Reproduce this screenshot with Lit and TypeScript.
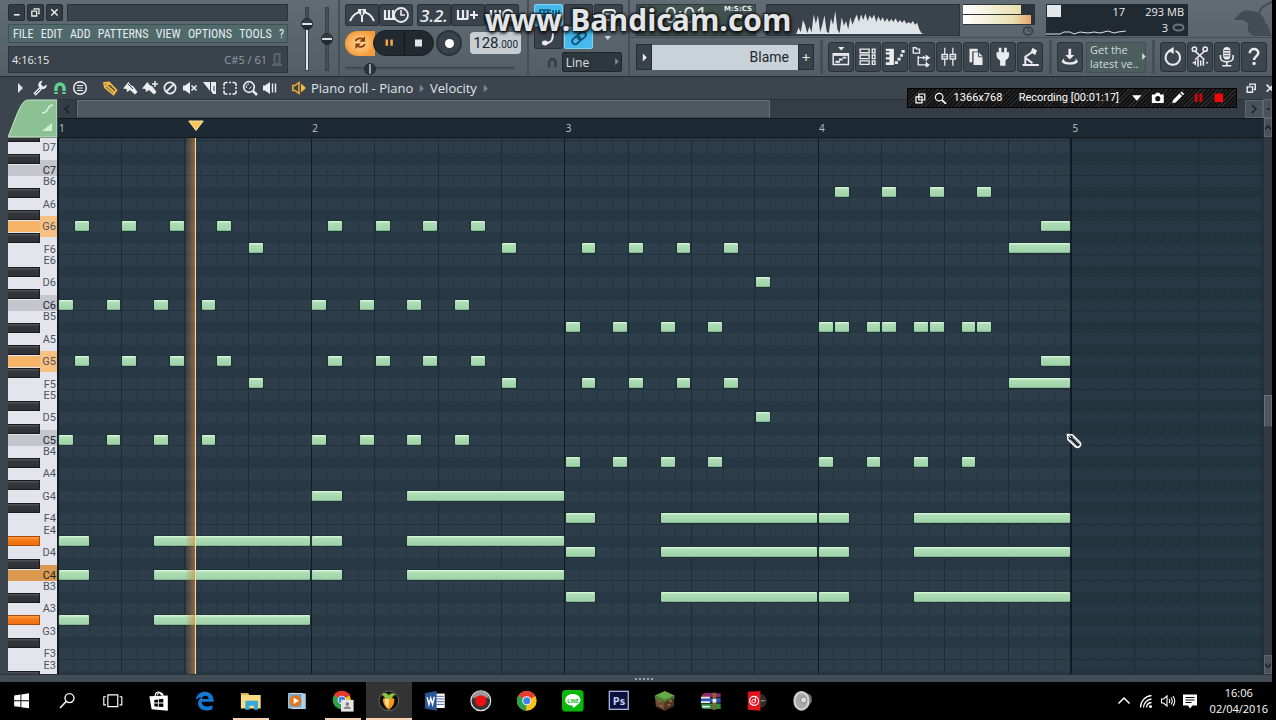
import { LitElement, html, svg, css, nothing, TemplateResult } from "lit";
import { customElement, property } from "lit/decorators.js";
import { classMap } from "lit/directives/class-map.js";
import { styleMap } from "lit/directives/style-map.js";

/* ---------- icon set ---------- */

const w = "#e8edf0";
const ICONS: Record<string, [number, number, TemplateResult]> = {
  minimize: [16, 16, svg`<path d="M5 11h7" stroke=${w} stroke-width="2"/>`],
  restore: [16, 16, svg`<path d="M6.500 5V3.500h6v6H11M3.500 6.500h6v6h-6z" fill="none" stroke=${w} stroke-width="1.600"/>`],
  close: [16, 16, svg`<path d="M4 4l8 8M12 4l-8 8" stroke=${w} stroke-width="1.800"/>`],
  metronome: [32, 20, svg`<path d="M4 16C7 9 11 7 16 7s9 2 12 9M16 4v13" fill="none" stroke=${w} stroke-width="2"/><path d="M12 4h8v3l-4 5-4-5z" fill=${w}/><path d="M16 5v5" stroke="#3a434c" stroke-width="1.500"/>`],
  waitinput: [32, 20, svg`<path d="M5 5v9h11M9 5v9M13 5v9" fill="none" stroke=${w} stroke-width="2.200"/><circle cx="21" cy="10" r="7" fill="#3a434c" stroke=${w} stroke-width="1.800"/><path d="M21 5v5h4" fill="none" stroke=${w} stroke-width="1.600"/>`],
  stepadd: [32, 20, svg`<path d="M6 5v9h10M11 5v9M15.500 5v9" fill="none" stroke=${w} stroke-width="2.200"/><path d="M18 10h8M22 6v8" stroke=${w} stroke-width="2"/>`],
  loopkeys: [32, 20, svg`<path d="M5 5v9h10M9.500 5v9M14 5v9" fill="none" stroke=${w} stroke-width="2.200"/><path d="M19 14a5 5 0 1 1 6 0M24 16l3-4-5-1" fill="none" stroke=${w} stroke-width="1.800"/>`],
  typing: [28, 20, svg`<path d="M4 5h12M4 8.500h12M4 12h12M5 5v10M9 5v10M13 5v10M18 5v10h6M21 5v10M24 5v10" stroke="#0d5273" stroke-width="1.500" fill="none"/>`],
  arrowbar: [28, 20, svg`<path d="M7 10h9M14 6l4 4-4 4M20 5v10" stroke=${w} stroke-width="2" fill="none"/>`],
  knob: [28, 20, svg`<rect x="8" y="5" width="12" height="10" rx="3" fill="none" stroke=${w} stroke-width="2"/><path d="M10 9h8" stroke=${w}/>`],
  slide: [28, 20, svg`<path d="M9 15c7 1 9-3 9-10" stroke=${w} stroke-width="2" fill="none"/><ellipse cx="10" cy="15" rx="3" ry="2.400" fill=${w}/>`],
  link: [28, 20, svg`<g fill="none" stroke="#0d5273" stroke-width="1.800" transform="rotate(-40 14 10)"><rect x="6" y="7" width="9" height="6" rx="3"/><rect x="13" y="7" width="9" height="6" rx="3"/></g>`],
  loop: [28, 24, svg`<g fill="none" stroke="#8a3d0c" stroke-width="2.400"><path d="M8 10c2-4 7-4 10-2M20 14c-2 4-7 4-10 2"/></g><path d="M20 4v7h-7zM8 20v-7h7z" fill="#8a3d0c"/>`],
  pause: [28, 24, svg`<path d="M11 8v8M17 8v8" stroke="#f6a54a" stroke-width="3.200"/>`],
  stop: [28, 24, svg`<rect x="10" y="8.500" width="7" height="7" fill="#dfe4e8"/>`],
  magnet: [16, 16, svg`<path d="M4 14V8a4 4 0 0 1 8 0v6" fill="none" stroke="currentColor" stroke-width="3.400"/><path d="M2 11.500h4M10 11.500h4" stroke="#3a434c"/>`],
  playlist: [24, 24, svg`<path d="M9 1h7l-3.500 4z" fill=${w}/><path d="M3.500 8.500h17v12h-17z" fill="none" stroke=${w} stroke-width="1.600"/><path d="M4 10h16" stroke=${w} stroke-width="2"/><path d="M6 17.500h5M10 15h4M14 13h4" stroke=${w} stroke-width="2"/>`],
  rack: [24, 24, svg`<g fill="none" stroke=${w} stroke-width="1.500"><path d="M3.500 3.500h10v4h-10zM3.500 10h10v4h-10zM3.500 16.500h10v4h-10z"/><path d="M17 3.500h3v4h-3zM17 10h3v4h-3zM17 16.500h3v4h-3z"/></g>`],
  roll: [24, 24, svg`<path d="M2 3h9v18H2v-3h4v-3H2v-2.500h4v-3H2V7h4V5.500H2z" fill=${w}/><path d="M12 18.500h3.500M15 14.500h3.500M18 10.500h3M19.500 6h3.500" fill="none" stroke=${w} stroke-width="3"/>`],
  browser: [24, 24, svg`<path d="M2.500 2v6h7V3.500H6.500L5.500 2z M8 11v10h5M8 13h6M14 11v4M17 10v7M17 18v5M13 21h7M14 13h7" fill="none" stroke=${w} stroke-width="1.500"/><path d="M17 10l4 3-4 3zM17 18l4 3-4 3z" fill=${w}/>`],
  mixer: [24, 24, svg`<path d="M7.500 2v20M16.500 2v20" stroke=${w} stroke-width="1.400"/><g fill="#3a434c" stroke=${w} stroke-width="1.500"><path d="M4.500 9.500h6v5h-6zM13.500 9.500h6v5h-6z"/></g><path d="M4 12h7M13 12h7" stroke=${w}/>`],
  paste: [24, 24, svg`<path d="M5 3h9v3H8v12H5z" fill=${w}/><path d="M9.500 7H15l4.500 4.500V21h-10z" fill=${w}/><path d="M15 7v5h5" fill="none" stroke="#3a434c"/>`],
  plug: [24, 24, svg`<path d="M7.500 2h3v5h3V2h3v5H19v3c0 4-3 5-4 6v6H9v-6c-1-1-4-2-4-6V7h2.500z" fill=${w}/>`],
  tempo: [24, 24, svg`<path d="M15 2l5 3-2 5-5-3z" fill=${w}/><path d="M14.500 7L7 12v8M7 13l8 6M4 21h18" stroke=${w} stroke-width="2.200" fill="none"/>`],
  download: [24, 24, svg`<path d="M10.500 3h3v7h3.500l-5 5-5-5h3.500z" fill=${w}/><path d="M6 13l-3 4c0 5 18 5 18 0l-3-4c2 4-2 5-6 5s-8-1-6-5z" fill=${w}/>`],
  undo: [24, 24, svg`<path d="M9 5.500a8 8 0 1 0 6 0" fill="none" stroke=${w} stroke-width="2.200"/><path d="M13 1v8L6.500 5z" fill=${w}/>`],
  cut: [24, 24, svg`<g fill="none" stroke=${w} stroke-width="1.700"><circle cx="6" cy="3.500" r="2.400"/><circle cx="18" cy="3.500" r="2.400"/><path d="M7 6l10 9M17 6L7 15"/><path d="M4 18.500h2M7 16v5M10 14v9M13 16v6M16 14v8M19 18.500h2"/></g>`],
  mic: [24, 24, svg`<rect x="8" y="1" width="8" height="14" rx="4" fill=${w}/><path d="M9 5h6M9 8h6M9 11h6" stroke="#3a434c"/><path d="M5 10v3c0 6 14 6 14 0v-3M12 17v4M7 22h10" fill="none" stroke=${w} stroke-width="1.800"/>`],
  help: [24, 24, svg`<path d="M7.500 8c0-6 9.500-6 9.500-.5 0 4-4.700 4-4.700 8" fill="none" stroke=${w} stroke-width="2.800"/><circle cx="12.300" cy="19.500" r="1.900" fill=${w}/>`],
  caret: [16, 16, svg`<path d="M6 3l5 5-5 5z" fill="currentColor"/>`],
  wrench: [16, 16, svg`<path d="M2.500 14.500L8.500 8.500" stroke=${w} stroke-width="3.200"/><path d="M14.800 4.500a4.300 4.300 0 1 1-4.200-3.800L8.800 4.200l2.500 2.500z" fill=${w}/><path d="M3.500 13.500l4.500-4.500" stroke="#3c454d" stroke-width="1"/>`],
  options: [16, 16, svg`<circle cx="8" cy="8" r="6.300" fill="none" stroke=${w} stroke-width="1.500"/><path d="M5 5.500h6M5 8h6M5 10.500h6" stroke=${w} stroke-width="1.200"/>`],
  pencil: [16, 16, svg`<path d="M2 3l5-.5 7.500 7.500-3 4.500L3 7.500zM3 7l4-4M5.500 6l6.500 6" fill="none" stroke="#f0b943" stroke-width="1.800"/>`],
  brush: [16, 16, svg`<path d="M1 8.500L6.500 2l2 3 3 1.500 4 5.500-2.500 2.500L8 10l-3 2-.5-3z" fill=${w}/><path d="M6 4l5 5" stroke="#3c454d"/>`],
  brushplus: [16, 16, svg`<path d="M0 8.500L5.500 2l2 3 3 1.500 4 5.500-2.500 2.500L7 10l-3 2-.5-3z" fill=${w}/><path d="M10 4h6M13 1v6" stroke=${w} stroke-width="1.500"/>`],
  erase: [16, 16, svg`<circle cx="8" cy="8" r="5.600" fill="none" stroke=${w} stroke-width="1.800"/><path d="M4 12l8-8" stroke=${w} stroke-width="1.800"/>`],
  mute: [16, 16, svg`<path d="M1 5.500h2L8 2v12L3 10.500H1z" fill=${w}/><path d="M9.500 5.500l5 5M14.500 5.500l-5 5" stroke=${w} stroke-width="1.600"/>`],
  slice: [16, 16, svg`<path d="M1 2h7v9z" fill=${w}/><path d="M9 2h5v12H11L9 11z" fill=${w}/><path d="M12 6v5" stroke="#3c454d"/>`],
  select: [16, 16, svg`<path d="M2 6V4.500a2 2 0 0 1 2-2h1.500M7 2.500h2M10.500 2.500H12a2 2 0 0 1 2 2V6M14 7v2M14 10.500V12a2 2 0 0 1-2 2h-1.500M9 14H7M5.500 14H4a2 2 0 0 1-2-2v-1.500M2 9V7" fill="none" stroke=${w} stroke-width="1.600"/>`],
  zoom: [16, 16, svg`<circle cx="7" cy="7" r="5.300" fill="none" stroke=${w} stroke-width="1.700"/><path d="M11 11l4 4" stroke=${w} stroke-width="2.600"/><path d="M4.500 8A3 3 0 0 1 7 4M9.500 6.500L7 9" stroke=${w} fill="none"/>`],
  playback: [16, 16, svg`<path d="M1 5.500h2L8 2v12L3 10.500H1z" fill=${w}/><path d="M10.500 3.500v9M13.500 3.500v9" stroke=${w} stroke-width="1.400"/>`],
  speaker: [16, 16, svg`<path d="M1.800 5.500h2L8 2.500v11l-4.200-3h-2z" fill="none" stroke="#f0a93a" stroke-width="1.500"/><path d="M10 3.500L15 8l-5 4.500z" fill="#f0b943"/>`],
  windows2: [16, 16, svg`<path d="M6 2.500h7.500V10H6zM2.500 6H10v7.500H2.500z" fill="none" stroke="#fff" stroke-width="1.500"/>`],
  camera: [16, 16, svg`<path d="M1 4h4l1-2h4l1 2h4v10H1z" fill="#fff"/><circle cx="8" cy="9" r="3" fill="#161616"/>`],
  pen: [16, 16, svg`<path d="M1.500 14.500l1-4 7.500-7.500 3 3-7.500 7.500zM11 2l1.500-1.500L15.500 3.500 14 5z" fill="#fff"/>`],
  recpause: [16, 16, svg`<path d="M5 3v10M10.500 3v10" stroke="#c40808" stroke-width="3.600"/>`],
  recstop: [16, 16, svg`<rect x="3" y="3" width="10" height="10" fill="#f00808"/>`],
  magnify: [16, 16, svg`<circle cx="6.500" cy="6.500" r="4.700" fill="none" stroke="#fff" stroke-width="1.500"/><path d="M10 10l5 5" stroke="#fff" stroke-width="2.200"/>`],
  down: [16, 16, svg`<path d="M2.500 5h11L8 11.500z" fill="currentColor"/>`],
  cursor: [16, 16, svg`<path d="M1.500 1.500l5 .5 7.500 7.500c2 3-1.500 6-4.300 4.300L2 6.500z" fill="#1b242b" stroke="#fff" stroke-width="1.600"/><path d="M4 6.500l7 7M6.500 4l7 7M1.500 1.500l3.500 3.500" stroke="#fff"/>`],
  start: [24, 24, svg`<path d="M3.500 6l7-1v6.500h-7zM11.500 4.900l8.500-1.200v7.800h-8.500zM3.500 12.500h7V19l-7-1zM11.500 12.500H20v7.800l-8.500-1.200z" fill="#fff"/>`],
  search: [24, 24, svg`<circle cx="15" cy="9" r="5" fill="none" stroke="#fff" stroke-width="1.500"/><path d="M11.500 12.500L4.500 20" stroke="#fff" stroke-width="1.700"/>`],
  taskview: [24, 24, svg`<path d="M6.500 5.500h11v13h-11zM4.500 7.500H2v9h2.500M19.500 7.500H22v9h-2.500" fill="none" stroke="#fff" stroke-width="1.300"/>`],
  store: [24, 24, svg`<path d="M8 7c0-6 6-6 7-1M10 6c2-5 7-3 7 2" fill="none" stroke="#fff" stroke-width="1.300"/><path d="M1.500 7L22 6v17L4 21.500z" fill="#fff"/><path d="M7 11l4-.5v3.500H7zM12 10.300l5-.6V14h-5zM7 15h4v3.500L7 18zM12 15h5v4l-5-.5z" fill="#000"/>`],
  edge: [24, 24, svg`<path d="M2 11C3 4 8 2 12 2c6 0 10 4 10 11H8.500c.5 6 7 6.500 12 4v4C13 25 4.500 22 4.500 14.500 4.500 11 7 8.500 9 8c-3 0-5.500 1.500-7 3zM8.700 10h7.500c0-4.500-6.500-5-7.500 0z" fill="#1278d4"/>`],
  explorer: [24, 24, svg`<path d="M1 3.500h8l1 2h13v15H1z" fill="#f7dc82"/><path d="M1 3.500h8l1 2H1z" fill="#dfb550"/><path d="M6 12h14v10h-4.500v-4.500h-5V22H6z" fill="#36a8dc"/>`],
  media: [24, 24, svg`<path d="M6 3l16 1v17H6z" fill="#a9cfe8"/><rect x="3" y="4" width="15" height="16" fill="#6da7d1" stroke="#d5e6f2"/><circle cx="10.500" cy="12" r="6.500" fill="#e6761c"/><path d="M8.500 8.500l6 3.500-6 3.500z" fill="#fff"/>`],
  chromedoc: [24, 24, svg`<circle cx="11" cy="11" r="10" fill="#fbc116"/><path d="M11 11L2.300 6A10 10 0 0 1 19.700 6z" fill="#e33b2e"/><path d="M11 11L2.300 6A10 10 0 0 0 11 21z" fill="#2ba24c"/><path d="M11 6.500h9L19 4z" fill="#e33b2e"/><circle cx="11" cy="11" r="4.700" fill="#fff"/><circle cx="11" cy="11" r="3.700" fill="#3f80ea"/><path d="M10 11h14v13H10z" fill="#e4e4e4"/><circle cx="17" cy="15.500" r="2" fill="#777"/><path d="M13 21c0-4 8-4 8 0z" fill="#888"/>`],
  fl: [24, 24, svg`<circle cx="12" cy="12" r="11" fill="#10130f" stroke="#6a7066"/><path d="M5.500 10C8 7.500 15 7 18 10c1 5-3 10-6 12-3-2-7-7-6.500-12z" fill="#f7981d"/><path d="M7.500 10.500c2-1.500 4.500-1 5 .5l-1.500 9c-2.500-2.500-4-6-3.500-9.500z" fill="#ffe08a"/><path d="M12 9.500C6 10 7 5.500 4 5.500 7 2 10.500 3.500 12 6c1.500-3 5.500-3.500 8-.5-4-.5-3 4.500-8 4z" fill="#8cc63e"/>`],
  word: [24, 24, svg`<path d="M11 4h12V20H11z" fill="#fff"/><path d="M14 7h8M14 10h8M14 13h8M14 16h8" stroke="#2b5797"/><path d="M1 3.500L14 1v22L1 20.500z" fill="#2b5797"/><path d="M3.500 8l2 8L7.500 9l2 7 2-8.500" fill="none" stroke="#fff" stroke-width="1.600"/>`],
  bandicam: [24, 24, svg`<circle cx="12" cy="12" r="11" fill="#333" stroke="#ddd" stroke-width="1.400"/><path d="M3 10a9 9 0 0 1 18 0c-6-4-12-4-18 0z" fill="#999"/><circle cx="12" cy="12" r="6.300" fill="#ee1111"/>`],
  chrome: [24, 24, svg`<circle cx="12" cy="12" r="11" fill="#fbc116"/><path d="M12 12L2.500 6.500A11 11 0 0 1 21.600 6.700z" fill="#e33b2e"/><path d="M12 12L2.500 6.500A11 11 0 0 0 11 23z" fill="#2ba24c"/><circle cx="12" cy="12" r="5" fill="#fff"/><circle cx="12" cy="12" r="4" fill="#3f80ea"/>`],
  ps: [24, 24, svg`<rect x="1.500" y="1.500" width="21" height="20" fill="#0b0f3d" stroke="#a8b4dd" stroke-width="1.500"/>`],
  line: [24, 24, svg`<rect width="24" height="24" rx="4" fill="#08b808"/><path d="M12 4.500c5 0 8.500 3 8.500 6.700 0 4-5 6.500-8.500 9v-2.700c-5 0-8.500-2.700-8.500-6.300 0-3.700 3.500-6.700 8.500-6.700z" fill="#fff"/>`],
  grass: [24, 24, svg`<path d="M12 1l11 5-11 5L1 6z" fill="#69a847"/><path d="M1 6l11 5v12L2 18z" fill="#6d4a32"/><path d="M23 6l-11 5v12l10-5z" fill="#51341f"/><path d="M1 6l11 5v3l-2-2-2 1-3-3-2 1-2-2zM23 6l-11 5v3l3-3 2 1 3-3 2 1z" fill="#4c8330"/><path d="M4 12l2 1M7 17l2 1M15 17l3-1M17 13l3-1" stroke="#a17a55" stroke-width="1.500"/>`],
  rar: [24, 24, svg`<path d="M2 5l4-2 17 1v4H2z" fill="#8b2d6b"/><path d="M1 9h22v5H1z" fill="#2f57b5"/><path d="M1 15h22v6H3z" fill="#2c8d3c"/><path d="M1 8.500h10M1 13.500h10M2 18.500h9" stroke="#eee" stroke-width="1.800"/><path d="M14 3h4v19h-4z" fill="#8a6335"/><path d="M14 10h4v4h-4z" fill="#eee"/>`],
  djay: [24, 24, svg`<path d="M15 4a8 8 0 0 1 0 16z" fill="#2b2b2b"/><path d="M17 11l6 1-6 1z" fill="#999"/><path d="M2 2l14-1v22L2 22z" fill="#e3131d"/><circle cx="9" cy="12" r="5" fill="none" stroke="#fff" stroke-width="1.300"/><circle cx="8.500" cy="12.500" r="2" fill="none" stroke="#fff"/><path d="M10.500 13V7.500" stroke="#fff"/>`],
  woofer: [24, 24, svg`<path d="M12 2l8 3 2 3v5l-5 7-6 2z" fill="#6f6f6f"/><ellipse cx="10.500" cy="12" rx="9" ry="11" fill="#d2d2d2"/><ellipse cx="10.500" cy="12" rx="6.500" ry="8.500" fill="#a8a8a8"/><circle cx="13" cy="11" r="3.500" fill="#dcdcdc" stroke="#777"/>`],
  up: [16, 16, svg`<path d="M2.500 10.500L8 5l5.500 5.500" fill="none" stroke="#fff" stroke-width="1.500"/>`],
  wifi: [16, 16, svg`<g fill="none" stroke="#fff" stroke-width="1.300"><path d="M2.500 14.500a12 12 0 0 1 11-12M5.500 14.500a9 9 0 0 1 8-8.500M8.500 14.500a5.500 5.500 0 0 1 5-5"/></g><circle cx="12.500" cy="13.500" r="1.500" fill="#fff"/>`],
  volume: [16, 16, svg`<path d="M1.500 6h2L7 3v10L3.500 10h-2zM9 6q1.500 2 0 4M11 4.500q2.500 3.500 0 7M13 3q3.500 5 0 10" fill="none" stroke="#fff" stroke-width="1.100"/>`],
  message: [16, 16, svg`<path d="M1 1.500h14v11H10.500L8 15.500 6 12.500H1z" fill="#fff"/><path d="M3.500 4.500h9M3.500 7h9M3.500 9.500h6" stroke="#000"/>`],
};

const icon = (name: string, scale = 1) => {
  const [iw, ih, body] = ICONS[name];
  return html`<svg width=${iw * scale} height=${ih * scale} viewBox="0 0 ${iw} ${ih}" aria-hidden="true">${body}</svg>`;
};

const shared = css`
  * { box-sizing: border-box; }
  button { font: inherit; color: inherit; background: none; border: 0; padding: 0; margin: 0; display: flex; align-items: center; justify-content: center; }
  svg { display: block; flex: none; }
`;

/* ---------- song data ---------- */

const NAMES = ["C", "C#", "D", "D#", "E", "F", "F#", "G", "G#", "A", "A#", "B"];
const TOP = 7 * 12 + 3; // D#7
const ROWS = 49;
const STEPS = 76.1; // sixteenth steps visible across the canvas
const SONG_STEPS = 64;
const POSITION = 8.65;
const pct = (v: number) => `${v * 100}%`;
const pitch = (name: string) => Number(name.slice(-1)) * 12 + NAMES.indexOf(name.slice(0, -1));

type Pattern = [names: string, steps: number[], length: number];
const BARS: Pattern[][] = [
  [["G6 G5", [1, 4, 7, 10], 1], ["C6 C5", [0, 3, 6, 9], 1], ["F6 F5", [12], 1], ["D#4 C4 G#3", [0], 2], ["D#4 C4 G#3", [6], 10]],
  [["G6 G5", [1, 4, 7, 10], 1], ["C6 C5", [0, 3, 6, 9], 1], ["F6 F5", [12], 1], ["G4 D#4 C4", [0], 2], ["G4 D#4 C4", [6], 10]],
  [["F6 F5", [1, 4, 7, 10], 1], ["A#5 A#4", [0, 3, 6, 9], 1], ["D6 D5", [12], 1], ["F4 D4 A#3", [0], 2], ["F4 D4 A#3", [6], 10]],
  [["A#6 A#5", [1, 4, 7, 10], 1], ["A#5 A#4", [0, 3, 6, 9], 1], ["G6 G5", [14], 2], ["F6 F5", [12], 4], ["F4 D4 A#3", [0], 2], ["F4 D4 A#3", [6], 10]],
];
const NOTES = BARS.flatMap((bar, b) =>
  bar.flatMap(([names, steps, len]) =>
    names.split(" ").flatMap((n) => steps.map((s) => ({ row: TOP - pitch(n), start: b * 16 + s, len })))));
const HELD = new Set(["G6", "G5", "C4", "D#4", "G#3"]);
const KEYS = Array.from({ length: ROWS }, (_, i) => {
  const p = TOP - i;
  const note = NAMES[p % 12];
  return { name: note + Math.floor(p / 12), sharp: note.length > 1, isC: note === "C", bLine: note === "C" || note === "F" };
});

/* ---------- toolbar ---------- */

@customElement("main-toolbar")
class MainToolbar extends LitElement {
  static styles = [shared, css`
    :host { display: flex; height: 77px; padding-left: 8px; background: linear-gradient(#626c74, #535d65); border-bottom: 1px solid #262e35; color: #e8edf0; font-family: "Open Sans", sans-serif; }
    .well { background: #3a434b; border: 1px solid #2c343b; }
    .menus { width: 280px; padding-top: 4px; display: flex; flex-direction: column; gap: 3px; }
    .caption { display: flex; gap: 2px; height: 17px; }
    .caption button { width: 17px; background: #323a42; border: 1px solid #252c33; border-radius: 2px; }
    .caption .well { flex: 1; margin-left: 2px; }
    .menu { height: 19px; display: flex; align-items: center; justify-content: space-between; padding: 0 3px 0 4px; background: #50696b; border: 1px solid #3e5254; font-family: "Liberation Sans Narrow", "Roboto Condensed", Roboto, sans-serif; font-size: 12px; }
    .hint { height: 27px; display: flex; align-items: center; justify-content: space-between; padding: 0 5px 0 3px; font-size: 11px; }
    .hint span { color: #929ca3; margin-left: auto; margin-right: 5px; }
    .faders { width: 50px; padding: 7px 6px 0 12px; display: flex; gap: 7px; }
    input[type="range"] { appearance: none; background: none; margin: 0; }
    .faders input { writing-mode: vertical-lr; direction: rtl; width: 13px; height: 64px; }
    .faders input::-webkit-slider-runnable-track { width: 4px; margin: 0 4px; background: #454f57; border: 1px solid #39424a; }
    .faders .vol::-webkit-slider-runnable-track { background: linear-gradient(#454f57 20%, #dfe3e6 20%); }
    input::-webkit-slider-thumb { appearance: none; width: 12px; height: 12px; margin-left: -5px; border-radius: 50%; background: linear-gradient(#363e45 44%, #dfe3e6 44% 56%, #22292f 56%); border: 1px solid #20272d; }
    .group { border-left: 2px solid #454f57; padding: 4px 6px 0 5px; }
    .transport { width: 189px; display: flex; flex-direction: column; gap: 4px; }
    .row { display: flex; align-items: center; }
    .tool { height: 22px; width: 34px; background: #3a434c; border: 1px solid #2a3239; border-radius: 2px; }
    .count { font-size: 17px; font-style: italic; font-weight: 600; }
    .gap { margin-right: 4px; }
    .play { height: 26px; }
    .loop { width: 30px; height: 25px; border-radius: 13px 0 0 13px; background: radial-gradient(#ffd9a0, #f49a36 75%); }
    .pill { display: flex; height: 26px; margin-left: -2px; border-radius: 13px; background: #22292f; border: 1px solid #181e23; overflow: hidden; }
    .pill button { width: 30px; }
    .pill button + button { border-left: 1px solid #12171b; }
    .rec { width: 26px; height: 26px; margin-left: 2px; border-radius: 50%; background: #394149; border: 2px solid #2b3238; }
    .rec i { width: 9px; height: 9px; border-radius: 50%; background: #fff; }
    .bpm { margin-left: 8px; width: 51px; height: 22px; border-radius: 4px; background: #c6ced4; color: #20272d; font-family: "Liberation Sans Narrow", Roboto, sans-serif; font-size: 15px; }
    .bpm small { font-size: 10px; align-self: flex-end; line-height: 18px; }
    .pos { width: 170px; height: 17px; margin-left: 3px; background: repeating-linear-gradient(90deg, #454f57 0 1px, transparent 1px 41px) 3px 9px / 100% 5px no-repeat; }
    .pos::-webkit-slider-runnable-track { height: 3px; background: #4a545c; border-top: 1px solid #3a434b; }
    .pos::-webkit-slider-thumb { margin: -5px 0 0; background: linear-gradient(90deg, #2b3238 42%, #99a1a7 42% 58%, #2b3238 58%); }
    .tools { width: 101px; display: flex; flex-direction: column; gap: 1px; }
    .tools .tool { width: 29px; margin-right: 1px; }
    .tools .on { background: #45b8ec; border-color: #7fd3f5; }
    .drop { width: 29px; color: #cfd5d9; }
    .snap { margin-top: 2px; padding-left: 12px; color: #363e45; gap: 3px; }
    .field { flex: 1; display: grid; color: #7d878e; align-items: center; justify-items: end; }
    .field > * { grid-area: 1 / 1; }
    .snap select { appearance: none; width: 100%; height: 20px; border: 1px solid #1f262b; border-radius: 2px; background: #2f373e; color: #dde2e5; font: 12px "Open Sans", sans-serif; padding: 0 3px; }
    .field svg { pointer-events: none; }
    .right { flex: 1; min-width: 0; display: flex; flex-direction: column; border-left: 2px solid #454f57; }
    .top { display: flex; height: 38px; padding-left: 6px; border-bottom: 1px solid #454f57; }
    .time { width: 120px; margin-top: 4px; height: 32px; background: #40514f; border: 1px solid #2f3b3d; display: flex; justify-content: flex-end; gap: 16px; padding-right: 3px; font: 22px/18px "Open Sans", sans-serif; }
    .time small { font: bold 7px/9px "DejaVu Sans", sans-serif; }
    .scope { width: 194px; height: 32px; margin: 4px 0 0 10px; }
    .meters { width: 72px; margin: 4px 11px 0 3px; display: flex; flex-direction: column; align-items: flex-end; }
    .vu { width: 72px; height: 21px; background: #2c343b; display: flex; flex-direction: column; gap: 1px; padding-top: 1px; }
    .vu i { height: 9px; }
    .vu .l { width: 58px; background: linear-gradient(90deg, #fff, #e8dfae); }
    .vu .r { width: 68px; background: linear-gradient(90deg, #fff, #e8dfae 75%, #e8a36b); }
    .cpu { width: 142px; height: 32px; margin-top: 4px; background: #222a31; display: grid; grid-template-columns: 81px 1fr; font: 11px/15px "Open Sans", sans-serif; text-align: right; }
    .cpu .a { display: flex; justify-content: space-between; padding: 0 2px 0 1px; }
    .cpu .a i { width: 14px; height: 12px; margin-top: 1px; background: #e3e7ea; }
    .cpu .b { padding-right: 4px; }
    .cpu .c { padding: 8px 0 0; }
    .cpu .d { display: flex; align-items: center; justify-content: flex-end; gap: 4px; padding-right: 3px; }
    .fruit { margin-left: auto; }
    .bottom { flex: 1; display: flex; align-items: center; padding: 0 5px 0 6px; }
    .step { width: 16px; height: 26px; background: #39424a; border: 1px solid #262e35; font-size: 15px; }
    .pattern { width: 146px; height: 25px; border: 0; background: #c9d2d9; color: #20272d; text-align: right; padding: 0 9px; font: 14px "Liberation Sans Narrow", Roboto, sans-serif; }
    .strip { display: flex; gap: 1px; padding-left: 5px; margin-left: 6px; border-left: 3px solid #454f57; height: 34px; align-items: center; }
    .big { width: 26px; height: 30px; background: #3d464e; border: 1px solid #2a3239; border-radius: 3px; }
    .news { width: 60px; height: 31px; margin-left: 2px; background: #4c5d60; border: 1px solid #435053; font: 11px/14px "Open Sans", sans-serif; justify-content: space-between; text-align: left; padding-left: 3px; white-space: nowrap; color: #cfdcdc; }
    .tail { margin-left: auto; }
  `];

  render() {
    const menus = ["FILE", "EDIT", "ADD", "PATTERNS", "VIEW", "OPTIONS", "TOOLS", "?"];
    const spikes = [0, 6, 1, 14, 9, 0, 7, 1, 20, 10, 19, 1, 9, 19, 2, 0, 16, 9, 24, 4, 0, 17, 8, 13, 4, 17, 9, 15, 20, 12, 20, 14, 21, 13, 19, 15, 20, 12, 18, 13, 17, 12, 16, 12, 15, 12, 16, 11, 14, 11, 14, 10, 12, 10, 13, 9, 11, 4, 0];
    const outline = spikes.map((v, i) => `${26 + i * 2.3},${30 - v}`).join(" ");
    return html`
      <div class="menus">
        <div class="caption">
          ${["minimize", "restore", "close"].map((n) => html`<button aria-label=${n}>${icon(n, 0.8)}</button>`)}
          <div class="well"></div>
        </div>
        <nav class="menu">${menus.map((m) => html`<button>${m}</button>`)}</nav>
        <div class="well hint">4:16:15<span>C#5 / 61</span>
          <svg width="10" height="14" viewBox="0 0 10 14" aria-hidden="true"><path d="M2.500 1h5v10h-5zM0 12h10" fill="none" stroke="#59636b" stroke-width="2" /></svg>
        </div>
      </div>
      <div class="faders">
        <input class="vol" type="range" aria-label="Volume" value="80" />
        <input type="range" aria-label="Pitch" value="50" />
      </div>
      <div class="group transport">
        <div class="row">
          <button class="tool" aria-label="Metronome">${icon("metronome")}</button>
          <button class="tool gap" aria-label="Wait for input">${icon("waitinput")}</button>
          <button class="tool count" aria-label="Countdown">3.2.</button>
          <button class="tool" aria-label="Step edit">${icon("stepadd")}</button>
          <button class="tool" aria-label="Loop record">${icon("loopkeys")}</button>
        </div>
        <div class="row play">
          <button class="loop" aria-label="Song mode">${icon("loop", 0.8)}</button>
          <div class="pill">
            <button aria-label="Pause">${icon("pause", 0.8)}</button>
            <button aria-label="Stop">${icon("stop")}</button>
          </div>
          <button class="rec" aria-label="Record"><i></i></button>
          <button class="bpm" aria-label="Tempo">128<small>.000</small></button>
        </div>
        <input class="pos" type="range" aria-label="Song position" value="12" />
      </div>
      <div class="group tools">
        <div class="row">
          <button class="tool on" aria-label="Typing keyboard">${icon("typing")}</button>
          <button class="tool" aria-label="Auto scroll">${icon("arrowbar")}</button>
          <button class="tool" aria-label="Control">${icon("knob")}</button>
        </div>
        <div class="row">
          <button class="tool" aria-label="Slide">${icon("slide")}</button>
          <button class="tool on" aria-label="Link">${icon("link")}</button>
          <button class="drop" aria-label="More">${icon("down", 0.6)}</button>
        </div>
        <div class="row snap">
          ${icon("magnet", 0.8)}
          <div class="field"><select aria-label="Snap"><option>Line</option></select>${icon("caret", 0.7)}</div>
        </div>
      </div>
      <div class="right">
        <div class="top">
          <div class="time"><span>0:01</span><small>M:S:CS</small></div>
          <svg class="scope well" viewBox="0 0 194 32"><polygon points="26,31 ${outline} 162,31" fill="#dfe4e8" /></svg>
          <div class="meters">
            <div class="vu"><i class="l"></i><i class="r"></i></div>
            <svg width="14" height="12" viewBox="0 0 14 12"><ellipse cx="7" cy="6" rx="4.500" ry="4" fill="none" stroke="#343d44" stroke-width="1.500" /><path d="M7 3v3h3" fill="none" stroke="#343d44" /></svg>
          </div>
          <div class="cpu">
            <div class="a"><i></i>17</div><div class="b">293 MB</div>
            <div class="c"><svg width="80" height="8" viewBox="0 0 80 8"><path d="M0 6h14l4-2 6 0 4 2 6-2 8 1 6-1 6 1 8-2 6 2 4-1 8-1" fill="none" stroke="#dfe4e8" /></svg></div>
            <div class="d">3<svg width="13" height="9" viewBox="0 0 13 9"><ellipse cx="6.500" cy="4.500" rx="5" ry="3" fill="none" stroke="#6c757c" stroke-width="2" /></svg></div>
          </div>
          <svg class="fruit" width="40" height="38" viewBox="0 0 40 38"><path d="M2 20c4-6 10-12 18-9 6 0 12 4 13 12 5 2 4 10 7 13H22c-6-2-8-8-5-13-4 0-5-4-9-3z" fill="#434c54" /><path d="M27 14c1-6 5-9 13-12" fill="none" stroke="#434c54" stroke-width="2" /></svg>
        </div>
        <div class="bottom">
          <button class="step" aria-label="Pattern menu">${icon("caret", 0.8)}</button>
          <input class="pattern" type="text" aria-label="Pattern name" value="Blame" />
          <button class="step" aria-label="New pattern">+</button>
          <div class="strip">
            ${["playlist", "rack", "roll", "browser", "mixer", "paste", "plug", "tempo"].map((n) => html`<button class="big" aria-label=${n}>${icon(n, 0.9)}</button>`)}
          </div>
          <div class="strip">
            <button class="big" aria-label="Download">${icon("download", 0.9)}</button>
            <button class="news"><span>Get the<br />latest ve..</span>${icon("caret", 0.7)}</button>
          </div>
          <div class="strip tail">
            ${["undo", "cut", "mic", "help"].map((n) => html`<button class="big" aria-label=${n}>${icon(n, 0.9)}</button>`)}
          </div>
        </div>
      </div>`;
  }
}

/* ---------- piano roll ---------- */

@customElement("piano-roll")
class PianoRoll extends LitElement {
  static styles = [shared, css`
    :host { flex: 1; min-height: 0; display: flex; flex-direction: column; background: #3c454d; color: #dfe4e8; font-family: "Open Sans", sans-serif; }
    .title { height: 22px; display: flex; align-items: center; padding-left: 12px; gap: 4px; font-size: 13px; overflow: hidden; }
    .title .on { color: #5fd38f; }
    .title .gap { margin-left: 10px; }
    .title .snd { margin-left: 9px; }
    .title .sep { color: #7d878e; margin: 0 -2px; }
    .title .wins { margin: 0 -5px 0 auto; display: flex; gap: 4px; }
    .body { flex: 1; min-height: 0; display: grid; grid-template: 19px 20px minmax(0, 1fr) / 50px minmax(0, 1fr) 9px; padding-left: 8px; }
    .corner { grid-row: span 2; }
    .hscroll { display: flex; border-top: 1px solid #2b3339; background: #343d45; }
    .hscroll button { width: 18px; }
    .thumb { background: #4e5860; border: 1px solid #66727a; border-bottom-color: #3a434b; }
    .hscroll .track { flex: 1; border-left: 1px solid #262e35; }
    .hscroll .thumb { width: 59.3%; height: 100%; }
    .end { background: #48525a; border: 1px solid #5b666e; }
    .ruler { position: relative; background: #1d2a34; border-top: 1px solid #11191f; border-bottom: 1px solid #11191f; font: 10px/19px "Open Sans", sans-serif; color: #b9c3ca; }
    .ruler span { position: absolute; top: 0; padding-left: 1px; }
    .marker { position: absolute; top: 1px; margin-left: -7px; }
    .keys { overflow: hidden; background: #e3e4ec; border-right: 1px solid #12191f; }
    .scale { height: 551px; margin-top: -7px; }
    .keys .scale { display: grid; grid-template-rows: repeat(49, minmax(0, 1fr)); }
    .key { position: relative; display: flex; justify-content: flex-end; align-items: center; padding-right: 1px; font: 11px/11px "Liberation Sans Narrow", Roboto, sans-serif; color: #50545c; }
    .key span { position: relative; }
    .key.c { background: #c4c5cd; color: #22262c; }
    .key.held { background: #f6b468; }
    .key.held::before { content: ""; position: absolute; right: 0; top: -5px; bottom: -5px; width: 17px; background: #f9c083; }
    .key.c.held { background: #dc9a50; }
    .key.c::before { content: ""; position: absolute; right: 0; top: -5px; bottom: 0; width: 17px; background: #c4c5cd; }
    .key.c.held::before { background: #dc9a50; bottom: 0; }
    .sharp { justify-content: flex-start; padding: 0; z-index: 1; }
    .sharp i { width: 32px; height: 10px; background: linear-gradient(#55565c, #35363b 30%, #2f3035); border: 1px solid #1b1c20; border-left: 0; }
    .sharp.held i { background: linear-gradient(#ff9b45, #f57a17 40%, #ee6f0e); border-color: #a84c0c; }
    .sharp.held { background: none; }
    .sharp.held::before { content: none; }
    .canvas { position: relative; overflow: hidden; background: #2d3e4a; }
    .canvas .scale { position: relative; }
    .grid { width: 100%; height: 100%; }
    .note { position: absolute; height: 10px; margin-left: 1px; background: linear-gradient(#d3f5d6 0 1px, #aeddb6 2px, #9fd3a9); border-bottom: 1px solid #86b891; border-radius: 1px; box-shadow: 0 0 0 1px #22323b; }
    .playhead { position: absolute; top: 0; bottom: 0; width: 10px; margin-left: -9px; background: linear-gradient(90deg, rgba(190, 125, 60, 0.1), rgba(205, 135, 65, 0.6)); border-right: 1px solid #fbd9a8; }
    .cursor { position: absolute; }
    .vscroll { grid-row: span 2; display: flex; flex-direction: column; background: #323b43; border-left: 1px solid #262e35; }
    .vscroll button { height: 19px; overflow: hidden; }
    .vscroll .track { flex: 1; display: flex; flex-direction: column; }
    .vscroll .space { flex: 259; }
    .vscroll .thumb { flex: 30; }
    .vscroll .rest { flex: 229; }
    .foot { height: 8px; display: flex; justify-content: center; align-items: center; gap: 2px; padding-left: 16px; background: #434d55; border-top: 1px solid #2b343b; }
    .foot i { width: 2px; height: 2px; background: #99a2a8; }
  `];

  render() {
    return html`
      <div class="title">
        ${icon("caret")}${icon("wrench")}<span class="on">${icon("magnet")}</span>${icon("options")}
        <span class="gap">${icon("pencil")}</span>
        ${["brush", "brushplus", "erase", "mute", "slice", "select", "zoom", "playback"].map((n) => icon(n))}
        <span class="snd">${icon("speaker")}</span>
        <span>Piano roll - Piano</span><span class="sep">${icon("caret", 0.8)}</span>
        <span>Velocity</span><span class="sep">${icon("caret", 0.8)}</span>
        <span class="wins">${["minimize", "restore", "close"].map((n) => html`<button aria-label=${n}>${icon(n, 0.9)}</button>`)}</span>
      </div>
      <div class="body">
        <svg class="corner" width="49" height="39" viewBox="0 0 49 39">
          <path d="M0 38C6 24 10 10 15 4c2-3 4-3 8-3h26v37z" fill="#8cc293" stroke="#c9e8cb" />
          <path d="M34 14c8 0 4-8 11-8" fill="none" stroke="#dff3e0" stroke-width="1.500" /><path d="M34 32l10-8v8z" fill="#d3ecd4" />
        </svg>
        <div class="hscroll">
          <button aria-label="Scroll left">${this.chevron("M8 2L4 6l4 4")}</button>
          <div class="track"><div class="thumb"></div></div>
          <button class="end" aria-label="Scroll right">${this.chevron("M4 2l4 4-4 4")}</button>
        </div>
        <button class="end" aria-label="Zoom">${this.chevron("M5 6h3")}</button>
        <div class="ruler">
          ${[1, 2, 3, 4, 5].map((n, i) => html`<span style=${styleMap({ left: pct((i * 16) / STEPS) })}>${n}</span>`)}
          <svg class="marker" style=${styleMap({ left: pct(POSITION / STEPS) })} width="16" height="12" viewBox="0 0 16 12"><path d="M.8 1h14.400L8 10.500z" fill="#f8c656" stroke="#fde6a8" /></svg>
        </div>
        <div class="vscroll">
          <button class="end" aria-label="Scroll up">${this.chevron("M2 8l4-4 4 4")}</button>
          <div class="track"><div class="space"></div><div class="thumb"></div><div class="rest"></div></div>
          <button class="end" aria-label="Scroll down">${this.chevron("M2 4l4 4 4-4")}</button>
        </div>
        <div class="keys"><div class="scale">${KEYS.map((k) => html`
          <div class=${classMap({ key: true, sharp: k.sharp, c: k.isC, held: HELD.has(k.name) })}>
            ${k.sharp ? html`<i></i>` : html`<span>${k.name}</span>`}
          </div>`)}</div></div>
        <div class="canvas">
          <div class="scale">
            <svg class="grid" shape-rendering="crispEdges" aria-hidden="true">
              ${KEYS.map((k, i) => svg`
                ${k.sharp ? svg`<rect x="0" width="100%" y=${pct(i / ROWS)} height=${pct(1 / ROWS)} fill="#273743"/>` : nothing}
                ${k.bLine ? svg`<line x1="0" x2="100%" y1=${pct((i + 1) / ROWS)} y2=${pct((i + 1) / ROWS)} stroke="#22323c"/>` : nothing}`)}
              <rect x=${pct(SONG_STEPS / STEPS)} y="0" width="100%" height="100%" fill="#12282f" opacity="0.25" />
              ${Array.from({ length: Math.ceil(STEPS) }, (_, i) => svg`<line x1=${pct(i / STEPS)} x2=${pct(i / STEPS)} y1="0" y2="100%"
                stroke=${i % 16 === 0 && i <= SONG_STEPS ? "#0f1a22" : i % 4 === 0 ? "#1c2c37" : "#273742"} stroke-width=${i === SONG_STEPS ? 2 : 1} />`)}
            </svg>
            ${NOTES.map((n) => html`<div class="note" style=${styleMap({ left: pct(n.start / STEPS), top: pct(n.row / ROWS), width: `calc(${pct(n.len / STEPS)} - 2px)` })}></div>`)}
          </div>
          <div class="playhead" style=${styleMap({ left: pct(POSITION / STEPS) })}></div>
          <span class="cursor" style=${styleMap({ left: pct(1008 / 1205), top: pct(295 / 536) })}>${icon("cursor")}</span>
        </div>
      </div>
      <div class="foot">${[1, 2, 3, 4, 5].map(() => html`<i></i>`)}</div>`;
  }

  private chevron(d: string) {
    return html`<svg width="12" height="12" viewBox="0 0 12 12"><path d=${d} fill="none" stroke="#1c2329" stroke-width="1.600" /></svg>`;
  }
}

/* ---------- desktop taskbar ---------- */

@customElement("task-bar")
class TaskBar extends LitElement {
  static styles = [shared, css`
    :host { display: flex; height: 38px; background: #000; color: #fff; font: 11px/16px "Open Sans", sans-serif; }
    .app { width: 46px; position: relative; }
    .app:first-child { width: 44px; }
    .app.open::after { content: ""; position: absolute; left: 5px; right: 5px; bottom: 0; height: 2px; background: #f9d3b4; }
    .app.active { background: #333; }
    .app.active::after { left: 0; right: 0; }
    .app b { position: absolute; font: bold 11px/12px "Open Sans", sans-serif; color: #c3cdf2; }
    .app .tiny { font: bold 5px/6px "Open Sans", sans-serif; color: #08b808; }
    .tray { margin-left: auto; display: flex; align-items: center; gap: 6px; padding-right: 8px; }
    .clock { text-align: center; margin-left: 6px; }
  `];

  render() {
    const apps = ["start", "search", "taskview", "store", "edge", "explorer", "media", "chromedoc", "fl", "word", "bandicam", "chrome", "line", "ps", "grass", "rar", "djay", "woofer"];
    const open = new Set(["explorer", "chromedoc", "fl"]);
    return html`
      ${apps.map((a) => html`<button aria-label=${a} class=${classMap({ app: true, open: open.has(a), active: a === "fl" })}>
        ${icon(a, 0.9)}${a === "ps" ? html`<b>Ps</b>` : a === "line" ? html`<b class="tiny">LINE</b>` : nothing}</button>`)}
      <div class="tray">
        ${["up", "wifi", "volume", "message"].map((n) => html`<button aria-label=${n}>${icon(n)}</button>`)}
        <div class="clock">16:06<br />02/04/2016</div>
      </div>`;
  }
}

/* ---------- screen ---------- */

@customElement("app-root")
class AppRoot extends LitElement {
  @property() size = "1366x768";

  static styles = [shared, css`
    :host { display: flex; flex-direction: column; height: 100vh; position: relative; overflow: hidden; background: #000; }
    .studio { flex: 1; min-height: 0; display: flex; flex-direction: column; margin-right: 4px; }
    .brand { position: absolute; top: 2px; left: 0; right: 0; text-align: center; font: bold 30px/36px "Open Sans", sans-serif; color: #e3e6e8; text-shadow: 0 0 3px #111, 1px 1px 3px #111, -1px -1px 2px #222, 0 2px 4px #000; pointer-events: none; }
    .recorder { position: absolute; top: 88px; right: 39px; width: 330px; height: 20px; display: flex; align-items: center; gap: 7px; padding: 0 10px 0 6px; border: 1px solid #000; background: repeating-linear-gradient(135deg, #2c2c2c 0 1px, #121212 1px 3px); color: #fff; font: 11px/16px Roboto, sans-serif; }
    .recorder .status { margin: 0 4px 0 auto; }
  `];

  render() {
    return html`
      <div class="studio"><main-toolbar></main-toolbar><piano-roll></piano-roll></div>
      <task-bar></task-bar>
      <div class="brand">www.Bandicam.com</div>
      <div class="recorder">
        <button aria-label="Window">${icon("windows2", 0.8)}</button>
        <button aria-label="Zoom">${icon("magnify", 0.8)}</button>
        <span>${this.size}</span>
        <span class="status">Recording [00:01:17]</span>
        ${["down", "camera", "pen", "recpause", "recstop"].map((n) => html`<button aria-label=${n}>${icon(n, 0.85)}</button>`)}
      </div>`;
  }
}
